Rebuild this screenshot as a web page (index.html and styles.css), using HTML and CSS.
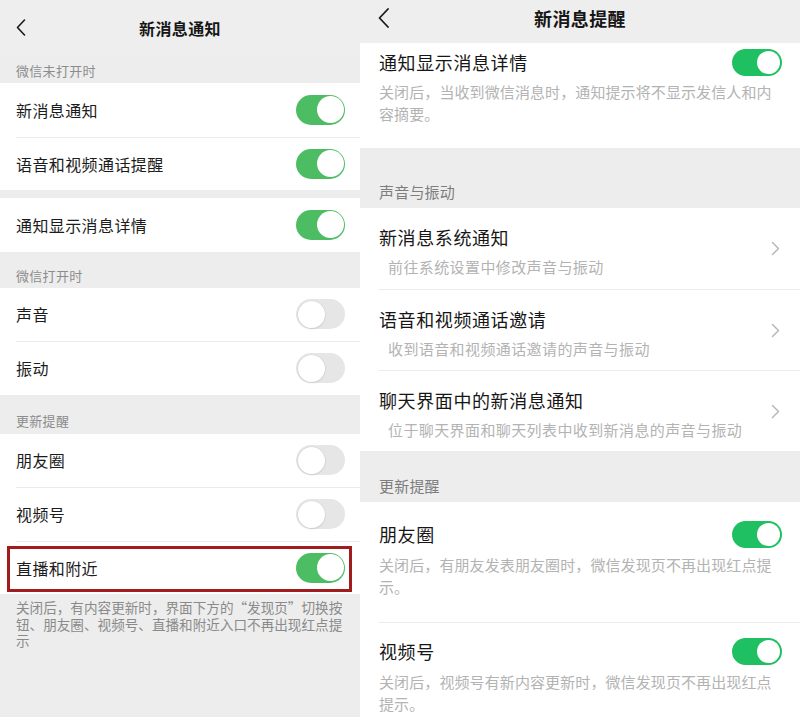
FILE: index.html
```html
<!DOCTYPE html>
<html lang="zh-CN">
<head>
<meta charset="utf-8">
<title>新消息通知</title>
<link rel="stylesheet" href="styles.css">
</head>
<body>
<div class="screen">
  <section class="panel panel-left">
    <header class="nav nav-left">
      <span class="back"><svg width="10" height="17" viewBox="0 0 10 17"><polyline points="8.5,1 1.5,8.5 8.5,16" fill="none" stroke="#1a1a1a" stroke-width="1.6" stroke-linecap="round" stroke-linejoin="round"/></svg></span>
      <h1 class="nav-title">新消息通知</h1>
      <span></span>
    </header>

    <div class="label label-first">微信未打开时</div>
    <div class="group">
      <div class="cell"><div class="cell-body"><span class="cell-text">新消息通知</span><span class="switch on"></span></div></div>
      <div class="cell"><div class="cell-body"><span class="cell-text">语音和视频通话提醒</span><span class="switch on"></span></div></div>
    </div>
    <div class="gap"></div>
    <div class="group">
      <div class="cell"><div class="cell-body"><span class="cell-text">通知显示消息详情</span><span class="switch on"></span></div></div>
    </div>

    <div class="label label-mid">微信打开时</div>
    <div class="group">
      <div class="cell"><div class="cell-body"><span class="cell-text">声音</span><span class="switch"></span></div></div>
      <div class="cell"><div class="cell-body"><span class="cell-text">振动</span><span class="switch"></span></div></div>
    </div>

    <div class="label label-last">更新提醒</div>
    <div class="group">
      <div class="cell"><div class="cell-body"><span class="cell-text">朋友圈</span><span class="switch"></span></div></div>
      <div class="cell"><div class="cell-body"><span class="cell-text">视频号</span><span class="switch"></span></div></div>
      <div class="cell marked"><div class="cell-body"><span class="cell-text">直播和附近</span><span class="switch on"></span></div></div>
    </div>
    <p class="footnote">关闭后，有内容更新时，界面下方的“发现页”切换按钮、朋友圈、视频号、直播和附近入口不再出现红点提示</p>
  </section>

  <section class="panel panel-right">
    <header class="nav nav-right">
      <span class="back back-r"><svg width="11" height="20" viewBox="0 0 11 20"><polyline points="10,1 1.5,10 10,19" fill="none" stroke="#1a1a1a" stroke-width="1.8" stroke-linecap="round" stroke-linejoin="round"/></svg></span>
      <h1 class="nav-title nav-title-r">新消息提醒</h1>
      <span></span>
    </header>

    <div class="rcard rcard-top">
      <div class="rhead"><span class="rtitle">通知显示消息详情</span><span class="switch switch-r on"></span></div>
      <p class="rdesc">关闭后，当收到微信消息时，通知提示将不显示发信人和内容摘要。</p>
    </div>

    <div class="rlabel rlabel-1">声音与振动</div>
    <div class="rcard">
      <div class="rcell"><div class="rlink">
        <div class="rlink-body"><div class="rtitle">新消息系统通知</div><div class="rsub">前往系统设置中修改声音与振动</div></div>
        <svg class="chev" width="9" height="15" viewBox="0 0 9 15"><polyline points="1.5,1.5 7.5,7.5 1.5,13.5" fill="none" stroke="#b8b8b8" stroke-width="1.5" stroke-linecap="round" stroke-linejoin="round"/></svg>
      </div></div>
      <div class="rcell"><div class="rlink">
        <div class="rlink-body"><div class="rtitle">语音和视频通话邀请</div><div class="rsub">收到语音和视频通话邀请的声音与振动</div></div>
        <svg class="chev" width="9" height="15" viewBox="0 0 9 15"><polyline points="1.5,1.5 7.5,7.5 1.5,13.5" fill="none" stroke="#b8b8b8" stroke-width="1.5" stroke-linecap="round" stroke-linejoin="round"/></svg>
      </div></div>
      <div class="rcell"><div class="rlink">
        <div class="rlink-body"><div class="rtitle">聊天界面中的新消息通知</div><div class="rsub">位于聊天界面和聊天列表中收到新消息的声音与振动</div></div>
        <svg class="chev" width="9" height="15" viewBox="0 0 9 15"><polyline points="1.5,1.5 7.5,7.5 1.5,13.5" fill="none" stroke="#b8b8b8" stroke-width="1.5" stroke-linecap="round" stroke-linejoin="round"/></svg>
      </div></div>
    </div>

    <div class="rlabel rlabel-2">更新提醒</div>
    <div class="rcard">
      <div class="rcell"><div class="rtoggle">
        <div class="rhead"><span class="rtitle">朋友圈</span><span class="switch switch-r on"></span></div>
        <p class="rdesc">关闭后，有朋友发表朋友圈时，微信发现页不再出现红点提示。</p>
      </div></div>
      <div class="rcell"><div class="rtoggle">
        <div class="rhead"><span class="rtitle">视频号</span><span class="switch switch-r on"></span></div>
        <p class="rdesc">关闭后，视频号有新内容更新时，微信发现页不再出现红点提示。</p>
      </div></div>
    </div>
  </section>
</div>
</body>
</html>
```

FILE: styles.css
```css
* { box-sizing: border-box; }
html, body {
  margin: 0;
  padding: 0;
  width: 800px;
  height: 717px;
  overflow: hidden;
  background: #ededed;
  font-family: "Noto Sans CJK SC", "Noto Sans", sans-serif;
  color: #1a1a1a;
}
.screen {
  display: flex;
  width: 800px;
  height: 717px;
}
.panel {
  background: #ededed;
  display: flex;
  flex-direction: column;
  overflow: hidden;
}
.panel > * { flex-shrink: 0; }
.panel-left { width: 360px; }
.panel-right { width: 440px; }

/* nav bars */
.nav {
  display: grid;
  grid-template-columns: 60px 1fr 60px;
  align-items: center;
}
.nav-left { height: 55px; background: #eeeeee; }
.nav-right { height: 43px; padding-bottom: 7px; background: #eeeeee; }
.back { display: flex; align-items: center; padding-left: 16px; }
.back-r { padding-left: 18px; }
.nav-title {
  margin: 0;
  text-align: center;
  font-size: 16px;
  font-weight: 600;
  letter-spacing: 0.4px;
  color: #161616;
}
.nav-title-r { font-size: 18px; letter-spacing: 0.4px; }

/* left labels */
.label {
  display: flex;
  align-items: flex-end;
  padding: 0 16px 3px;
  font-size: 13px;
  line-height: 18px;
  color: #8c8c8c;
  letter-spacing: 0.3px;
}
.label-first { height: 28px; }
.label-mid { height: 36px; }
.label-last { height: 39px; padding-bottom: 4px; }

.group { background: #fff; }
.gap { height: 8px; }

.cell { padding-left: 16px; background: #fff; }
.cell-body {
  height: 53.5px;
  padding-right: 15px;
  display: flex;
  align-items: center;
  justify-content: space-between;
}
.cell + .cell .cell-body { border-top: 1px solid #ebebeb; }
.cell-text {
  font-size: 16px;
  letter-spacing: 0.4px;
  color: #1c1c1c;
}
.cell.marked { position: relative; }
.cell.marked::after {
  content: "";
  position: absolute;
  left: 7px;
  right: 8px;
  top: 5px;
  bottom: 2px;
  border: 3px solid #a11d1d;
}

/* switches */
.switch {
  display: flex;
  justify-content: flex-start;
  align-items: center;
  width: 49px;
  height: 30px;
  padding: 1.5px;
  border-radius: 15px;
  background: #e6e6e6;
  flex-shrink: 0;
}
.switch::after {
  content: "";
  width: 27px;
  height: 27px;
  border-radius: 50%;
  background: #fff;
  box-shadow: 0 0 0 0.5px #d2d2d2, 0 1px 2px rgba(0,0,0,0.12);
}
.switch.on {
  justify-content: flex-end;
  background: #4dbd64;
}
.switch.on::after { box-shadow: none; }
.switch-r {
  width: 50px;
  height: 27px;
  padding: 2px;
  border-radius: 14px;
}
.switch-r::after { width: 23px; height: 23px; }
.switch-r.on { background: #1fc061; }

.footnote {
  margin: 0;
  padding: 5px 14px 0 16px;
  font-size: 13.6px;
  line-height: 16.5px;
  color: #8a8a8a;
}

/* right panel */
.rcard { background: #fff; }
.rcard-top { padding: 0 18px 23px 19px; }
.rhead {
  height: 38px;
  display: flex;
  align-items: center;
  justify-content: space-between;
}
.rtitle {
  font-size: 18px;
  letter-spacing: 0.6px;
  color: #161616;
}
.rdesc {
  margin: 0;
  font-size: 15px;
  line-height: 22px;
  letter-spacing: 0.1px;
  color: #b3b3b3;
}
.rlabel {
  display: flex;
  align-items: flex-end;
  padding: 0 19px 6px;
  font-size: 15px;
  line-height: 20px;
  color: #7d7d7d;
  letter-spacing: 0.2px;
}
.rlabel-1 { height: 60px; }
.rlabel-2 { height: 51px; }

.rcell { padding-left: 19px; }
.rcell + .rcell .rlink,
.rcell + .rcell .rtoggle { border-top: 1px solid #ececec; }
.rlink {
  height: 81px;
  padding-right: 20px;
  display: flex;
  align-items: center;
}
.rlink-body {
  flex: 1;
  align-self: flex-start;
  padding-top: 17px;
}
.rlink-body .rtitle { line-height: 24px; }
.rsub {
  margin-top: 8px;
  padding-left: 9px;
  font-size: 15px;
  line-height: 20px;
  letter-spacing: 0.4px;
  color: #b3b3b3;
}
.chev { flex-shrink: 0; }

.rtoggle { padding: 12px 18px 24px 0; }
.rcell + .rcell .rtoggle { padding-top: 8px; }
.rtoggle .rhead { height: 40px; }
```
